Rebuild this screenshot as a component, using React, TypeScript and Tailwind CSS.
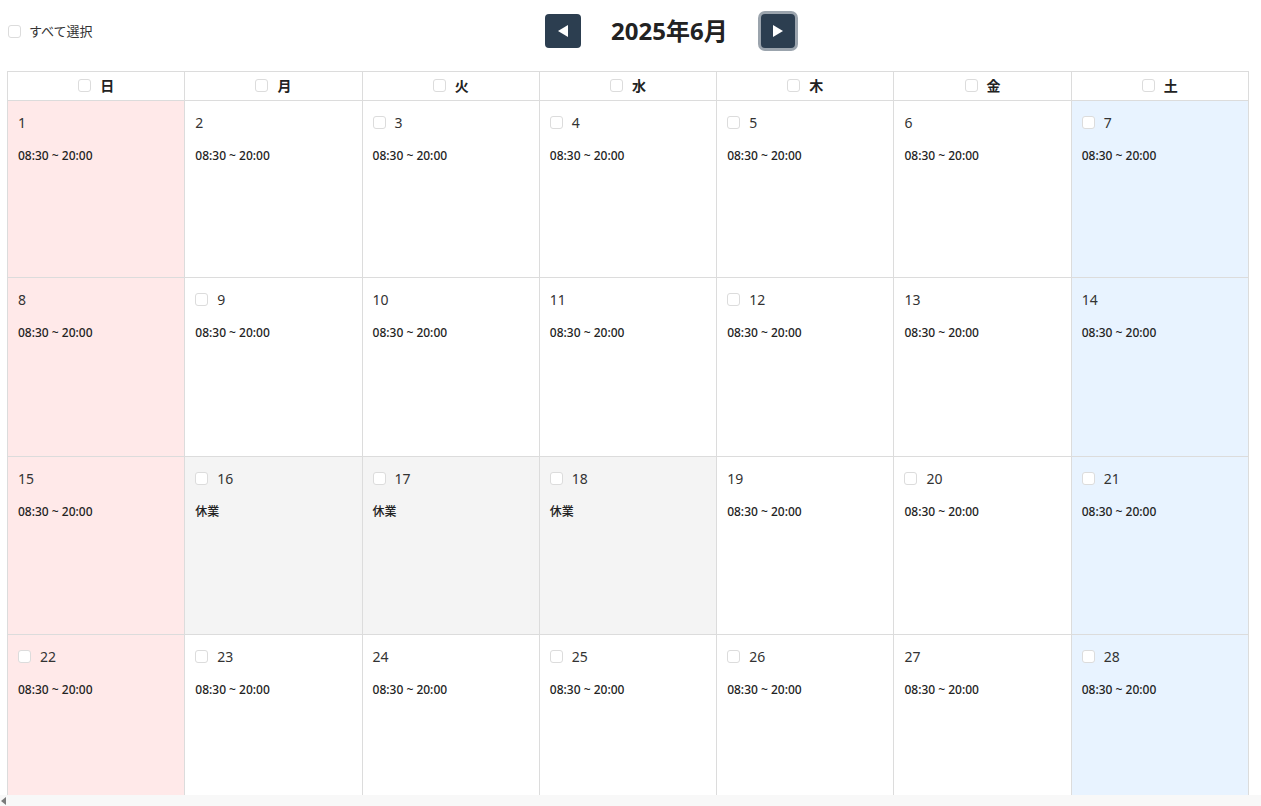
import React from "react";

type Day = { d: number; cb: boolean; holiday?: boolean };

const weeks: Day[][] = [
  [
    { d: 1, cb: false },
    { d: 2, cb: false },
    { d: 3, cb: true },
    { d: 4, cb: true },
    { d: 5, cb: true },
    { d: 6, cb: false },
    { d: 7, cb: true },
  ],
  [
    { d: 8, cb: false },
    { d: 9, cb: true },
    { d: 10, cb: false },
    { d: 11, cb: false },
    { d: 12, cb: true },
    { d: 13, cb: false },
    { d: 14, cb: false },
  ],
  [
    { d: 15, cb: false },
    { d: 16, cb: true, holiday: true },
    { d: 17, cb: true, holiday: true },
    { d: 18, cb: true, holiday: true },
    { d: 19, cb: false },
    { d: 20, cb: true },
    { d: 21, cb: true },
  ],
  [
    { d: 22, cb: true },
    { d: 23, cb: true },
    { d: 24, cb: false },
    { d: 25, cb: true },
    { d: 26, cb: true },
    { d: 27, cb: false },
    { d: 28, cb: true },
  ],
];

const heads = ["日", "月", "火", "水", "木", "金", "土"];
const rowH = ["h-[177px]", "h-[179px]", "h-[178px]", "h-[178px]"];

function Box() {
  return (
    <span className="inline-block w-[13px] h-[13px] rounded-[3px] border border-[#dcdcdc] bg-white shrink-0" />
  );
}

export default function App() {
  return (
    <div
      className="w-[1261px] h-[806px] flex flex-col bg-white text-[#222] overflow-hidden"
      style={{ fontFamily: '"Noto Sans", "Noto Sans CJK JP", sans-serif' }}
    >
      <div className="flex-1 overflow-hidden px-[7px]">
        <div className="flex items-center h-[71px] pb-[9px]">
          <div className="flex items-center pl-[1px] w-[538px] pt-[1px]">
            <Box />
            <span className="ml-[8px] text-[13px] text-[#333]">すべて選択</span>
          </div>
          <div className="flex items-center">
            <button className="w-[36px] h-[34px] rounded-[4px] bg-[#2c3e50] flex items-center justify-center">
              <svg width="12" height="14" viewBox="0 0 12 14">
                <polygon points="11,1 11,13 1,7" fill="#fff" />
              </svg>
            </button>
            <div className="mx-[30px] text-[24px] font-bold leading-none text-[#222]">2025年6月</div>
            <button className="ml-[3px] w-[34px] h-[34px] rounded-[4px] bg-[#2c3e50] flex items-center justify-center shadow-[0_0_0_3px_#9ba4ad]">
              <svg width="12" height="14" viewBox="0 0 12 14">
                <polygon points="1,1 1,13 11,7" fill="#fff" />
              </svg>
            </button>
          </div>
        </div>
        <div className="w-[1242px] border-l border-t border-[#dcdcdc]">
          <div className="grid grid-cols-7">
            {heads.map((h) => (
              <div
                key={h}
                className="h-[29px] pb-[2px] border-r border-b border-[#dcdcdc] flex items-center justify-center gap-[9px]"
              >
                <Box />
                <span className="text-[14px] font-bold text-[#222]">{h}</span>
              </div>
            ))}
          </div>
          {weeks.map((w, wi) => (
            <div key={wi} className="grid grid-cols-7">
              {w.map((day, di) => {
                const bg =
                  di === 0
                    ? "bg-[#ffe9e9]"
                    : di === 6
                    ? "bg-[#e8f3ff]"
                    : day.holiday
                    ? "bg-[#f4f4f4]"
                    : "bg-white";
                return (
                  <div
                    key={day.d}
                    className={`${rowH[wi]} ${bg} border-r border-b border-[#dcdcdc] pl-[10px] pt-[11px]`}
                  >
                    <div className="flex items-center h-[20px] gap-[9px]">
                      {day.cb && <Box />}
                      <span className="text-[14px] text-[#333]">{day.d}</span>
                    </div>
                    <div className="mt-[16px] text-[12px] font-medium leading-[16px] text-[#222]">
                      {day.holiday ? "休業" : "08:30 ~ 20:00"}
                    </div>
                  </div>
                );
              })}
            </div>
          ))}
        </div>
      </div>
      <div className="h-[11px] bg-[#f8f8f8] flex items-center shrink-0 relative">
        <svg width="6" height="8" viewBox="0 0 6 8" className="ml-[1px]">
          <polygon points="5,0 5,8 0,4" fill="#7a7a7a" />
        </svg>
      </div>
    </div>
  );
}
